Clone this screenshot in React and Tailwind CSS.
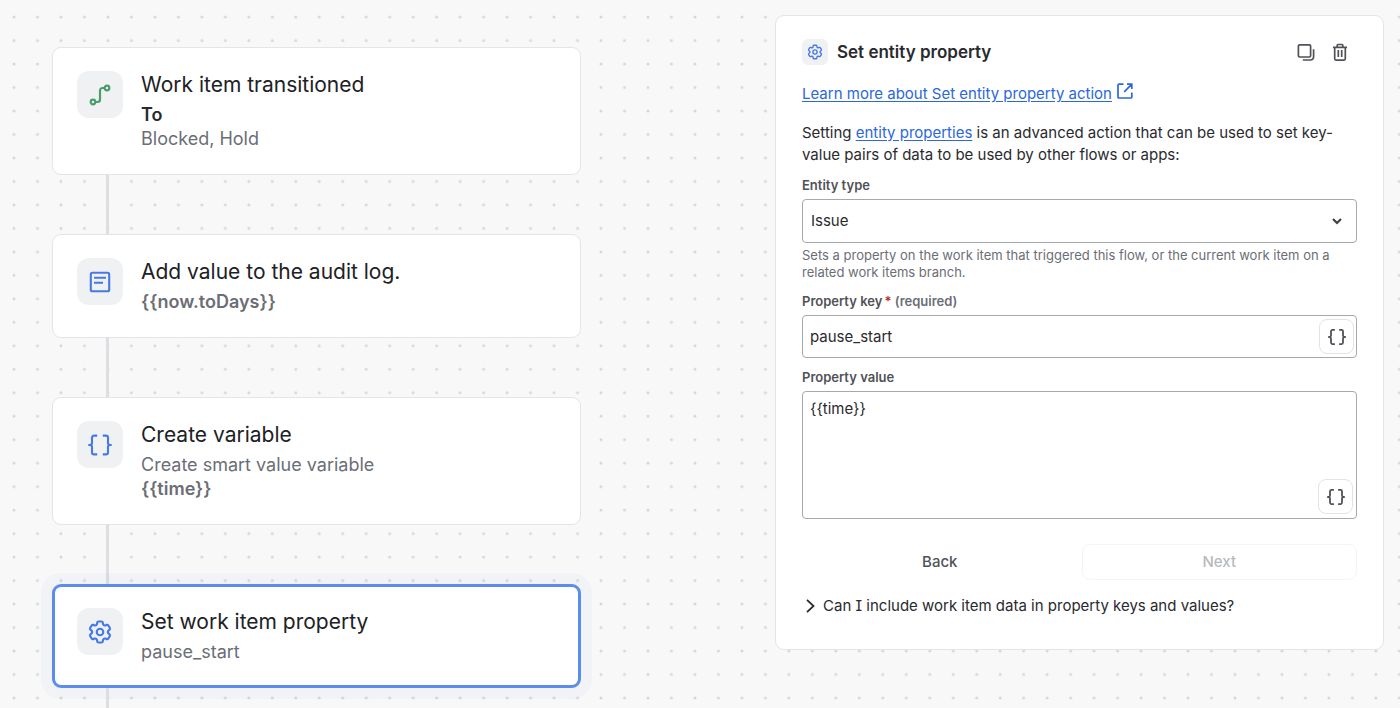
import { useState } from "react";

const GEAR =
  "M9.594 3.94c.09-.542.56-.94 1.11-.94h2.593c.55 0 1.02.398 1.11.94l.213 1.281c.063.374.313.686.645.87.074.04.147.083.22.127.325.196.72.257 1.075.124l1.217-.456a1.125 1.125 0 0 1 1.37.49l1.296 2.247a1.125 1.125 0 0 1-.26 1.431l-1.003.827c-.293.241-.438.613-.43.992a7.723 7.723 0 0 1 0 .255c-.008.378.137.75.43.991l1.004.827c.424.35.534.955.26 1.43l-1.298 2.247a1.125 1.125 0 0 1-1.369.491l-1.217-.456c-.355-.133-.75-.072-1.076.124a6.47 6.47 0 0 1-.22.128c-.331.183-.581.495-.644.869l-.213 1.281c-.09.543-.56.94-1.11.94h-2.594c-.55 0-1.019-.398-1.11-.94l-.213-1.281c-.062-.374-.312-.686-.644-.87a6.52 6.52 0 0 1-.22-.127c-.325-.196-.72-.257-1.076-.124l-1.217.456a1.125 1.125 0 0 1-1.369-.49l-1.297-2.247a1.125 1.125 0 0 1 .26-1.431l1.004-.827c.292-.24.437-.613.43-.991a6.932 6.932 0 0 1 0-.255c.007-.38-.138-.751-.43-.992l-1.004-.827a1.125 1.125 0 0 1-.26-1.43l1.297-2.247a1.125 1.125 0 0 1 1.37-.491l1.216.456c.356.133.751.072 1.076-.124.072-.044.146-.086.22-.128.332-.183.582-.495.644-.869l.214-1.28Z";

function Icon({ className, box = 24, stroke = 2, children }) {
  return (
    <svg
      className={className}
      viewBox={`0 0 ${box} ${box}`}
      fill="none"
      stroke="currentColor"
      strokeWidth={stroke}
      aria-hidden="true"
    >
      {children}
    </svg>
  );
}

function GearIcon({ className }) {
  return (
    <Icon className={className} stroke={1.85}>
      <path d={GEAR} strokeLinejoin="round" />
      <circle cx="12" cy="12" r="2.8" />
    </Icon>
  );
}

function TransitionIcon({ className }) {
  return (
    <Icon className={className} stroke={2.2}>
      <circle cx="5" cy="19" r="2.3" />
      <circle cx="19" cy="5" r="2.3" />
      <path d="M7.3 19h2.2a2.5 2.5 0 0 0 2.5-2.5v-9A2.5 2.5 0 0 1 14.5 5h2.2" />
    </Icon>
  );
}

function LogIcon({ className }) {
  return (
    <Icon className={className} stroke={2.1}>
      <rect x="2.8" y="2.8" width="18.4" height="18.4" rx="1.5" />
      <path d="M6 7.7h12M6 12.7h9" />
    </Icon>
  );
}

function BracesIcon({ className, stroke = 2.1 }) {
  return (
    <Icon className={className} stroke={stroke}>
      <path d="M9.2 2.6H6a2 2 0 0 0-2 2V10a2 2 0 0 1-2 2H.3H2a2 2 0 0 1 2 2v5.4a2 2 0 0 0 2 2h3.2" />
      <path d="M14.8 2.6H18a2 2 0 0 1 2 2V10a2 2 0 0 0 2 2h1.7H22a2 2 0 0 0-2 2v5.4a2 2 0 0 1-2 2h-3.2" />
    </Icon>
  );
}

function CopyIcon({ className }) {
  return (
    <Icon className={className} box={18} stroke={1.7}>
      <rect x="1.4" y="1.8" width="12.2" height="12.2" rx="1.2" />
      <path d="M5.8 17h7.8a3 3 0 0 0 3-3V6.2" />
    </Icon>
  );
}

function TrashIcon({ className }) {
  return (
    <Icon className={className} box={18} stroke={1.7}>
      <path d="M2 4.3h14M6.2 4.3V2.3a.8.8 0 0 1 .8-.8h4a.8.8 0 0 1 .8.8v2M3.7 4.3v11.5a1.3 1.3 0 0 0 1.3 1.3h8a1.3 1.3 0 0 0 1.3-1.3V4.3M7.3 7v7M10.7 7v7" />
    </Icon>
  );
}

function ExternalIcon({ className }) {
  return (
    <Icon className={className} box={16} stroke={1.7}>
      <path d="M6.5 1.2H2a1 1 0 0 0-1 1V14a1 1 0 0 0 1 1h11.8a1 1 0 0 0 1-1V9.5M10 1.2h4.8V6M14.8 1.2L7.2 8.8" />
    </Icon>
  );
}

const steps = [
  {
    title: "Work item transitioned",
    icon: <TransitionIcon className="size-6 text-[#4a9d6d]" />,
    lines: [
      { text: "To", className: "font-semibold text-[#292a2e]" },
      { text: "Blocked, Hold", className: "text-[#6b6e76]" },
    ],
  },
  {
    title: "Add value to the audit log.",
    icon: <LogIcon className="size-6 text-[#4679e6]" />,
    lines: [{ text: "{{now.toDays}}", className: "font-semibold text-[#6b6e76]" }],
  },
  {
    title: "Create variable",
    icon: <BracesIcon className="size-6 text-[#4679e6]" />,
    lines: [
      { text: "Create smart value variable", className: "text-[#6b6e76]" },
      { text: "{{time}}", className: "font-semibold text-[#6b6e76]" },
    ],
  },
  {
    title: "Set work item property",
    icon: <GearIcon className="size-7 text-[#4679e6]" />,
    lines: [{ text: "pause_start", className: "text-[#6b6e76]" }],
    selected: true,
  },
];

function Step({ step }) {
  return (
    <li>
      <button
        type="button"
        className={
          "flex w-full gap-[18px] rounded-[9px] bg-white text-left " +
          (step.selected
            ? "border-3 border-[#5c8ded] px-[22px] py-[21px] shadow-[0_0_0_11px_rgba(70,121,230,0.035)]"
            : "border border-[#e4e5e8] px-6 py-[23px]")
        }
      >
        <span className="flex h-[47px] w-[46px] shrink-0 items-center justify-center rounded-xl bg-[#f0f1f3]">
          {step.icon}
        </span>
        <span className="flex min-w-0 flex-col">
          <span className="mb-1 text-[21px] leading-7 text-[#202124]">{step.title}</span>
          {step.lines.map((line) => (
            <span key={line.text} className={"text-[18px] leading-6 " + line.className}>
              {line.text}
            </span>
          ))}
        </span>
      </button>
      <div className="ml-[54px] h-[59px] w-[3px] bg-[#dddee2]" />
    </li>
  );
}

function SmartValueButton() {
  return (
    <button
      type="button"
      aria-label="Insert smart value"
      className="flex size-[35px] items-center justify-center rounded-lg border border-[#e2e3e6] bg-white text-[#505258]"
    >
      <BracesIcon className="size-[18px]" stroke={2.4} />
    </button>
  );
}

function PropertyPanel() {
  const [key, setKey] = useState("pause_start");
  const [value, setValue] = useState("{{time}}");
  const label = "text-[13px] leading-[18px] font-semibold text-[#505258]";
  const field = "w-full rounded-[4px] border border-[#a5a8ae] bg-white text-[15px] text-[#292a2e]";

  return (
    <aside className="flex w-[609px] shrink-0 flex-col rounded-[9px] border border-[#e4e5e8] bg-white px-[26px] pt-[23px] pb-8 text-[15px] leading-[22px] text-[#292a2e]">
      <header className="flex items-center">
        <span className="flex size-[26px] items-center justify-center rounded-md bg-[#f0f1f3]">
          <GearIcon className="size-[18px] text-[#4679e6]" />
        </span>
        <h2 className="ml-[9px] flex-1 text-[17px] leading-[26px] font-semibold">Set entity property</h2>
        <div className="mr-2 flex gap-4 text-[#505258]">
          <button type="button" aria-label="Duplicate">
            <CopyIcon className="size-[18px]" />
          </button>
          <button type="button" aria-label="Delete">
            <TrashIcon className="size-[18px]" />
          </button>
        </div>
      </header>

      <a href="#learn-more" className="mt-[18px] flex gap-[5px] text-[#2c67dc]">
        <span className="underline underline-offset-2">Learn more about Set entity property action</span>
        <ExternalIcon className="size-4" />
      </a>

      <p className="mt-[17px]">
        Setting{" "}
        <a href="#entity-properties" className="text-[#2c67dc] underline underline-offset-2">
          entity properties
        </a>{" "}
        is an advanced action that can be used to set key-value pairs of data to be used by other flows or apps:
      </p>

      <label htmlFor="entity-type" className={"mt-[10px] " + label}>
        Entity type
      </label>
      <div className="relative mt-[5px]">
        <select id="entity-type" className={"block h-11 appearance-none px-2 " + field}>
          <option>Issue</option>
        </select>
        <svg
          className="pointer-events-none absolute top-4 right-[14px] size-3"
          viewBox="0 0 12 12"
          fill="none"
          stroke="#3f4146"
          strokeWidth="2.2"
          aria-hidden="true"
        >
          <path d="M2 4l4 4 4-4" />
        </svg>
      </div>
      <p className="mt-1 text-[13px] leading-[17px] text-[#6b6e76]">
        Sets a property on the work item that triggered this flow, or the current work item on a related work items
        branch.
      </p>

      <label htmlFor="property-key" className={"mt-[11px] " + label}>
        Property key<span className="ml-0.5 text-[#ae2e24]">*</span>{" "}
        <span className="text-[#6b6e76]">(required)</span>
      </label>
      <div className="relative mt-[5px]">
        <input
          id="property-key"
          type="text"
          required
          value={key}
          onChange={(e) => setKey(e.target.value)}
          className={"block h-[43px] pr-11 pl-[7px] " + field}
        />
        <div className="absolute top-1 right-[3px]">
          <SmartValueButton />
        </div>
      </div>

      <label htmlFor="property-value" className={"mt-[10px] " + label}>
        Property value
      </label>
      <div className="relative mt-[5px]">
        <textarea
          id="property-value"
          value={value}
          onChange={(e) => setValue(e.target.value)}
          className={"block h-32 resize-none px-[7px] py-[6px] leading-[22px] " + field}
        />
        <div className="absolute right-1 bottom-[5px]">
          <SmartValueButton />
        </div>
      </div>

      <div className="mt-[25px] grid grid-cols-2 gap-1 text-[15px] font-medium">
        <button type="button" className="h-9 rounded-lg text-[#505258]">
          Back
        </button>
        <button type="button" disabled className="h-9 rounded-lg border border-[#f4f4f6] text-[#b7b9be]">
          Next
        </button>
      </div>

      <button type="button" aria-expanded="false" className="mt-[15px] flex items-center gap-2 text-left">
        <svg
          className="ml-1 h-[14px] w-[9px]"
          viewBox="0 0 9 14"
          fill="none"
          stroke="currentColor"
          strokeWidth="1.8"
          aria-hidden="true"
        >
          <path d="M1 .8L7.5 7 1 13.2" />
        </svg>
        <span>
          Can <span className="[font-feature-settings:'cv08']">I</span> include work item data in property keys and
          values?
        </span>
      </button>
    </aside>
  );
}

export default function App() {
  return (
    <main className="relative isolate min-h-screen overflow-hidden bg-[#f8f8f8] font-[Inter,sans-serif]">
      <svg className="absolute inset-0 -z-10 size-full" aria-hidden="true">
        <defs>
          <pattern id="dots" x="2.3" y="5.3" width="23.48" height="23.48" patternUnits="userSpaceOnUse">
            <circle cx="11.74" cy="11.74" r="1.5" fill="#d6d7da" />
          </pattern>
        </defs>
        <rect width="100%" height="100%" fill="url(#dots)" />
      </svg>
      <div className="flex h-screen items-start justify-between gap-8 overflow-hidden pr-4">
        <ol className="w-full max-w-[581px] pt-[47px] pl-[52px]">
          {steps.map((step) => (
            <Step key={step.title} step={step} />
          ))}
        </ol>
        <div className="shrink-0 pt-[15px]">
          <PropertyPanel />
        </div>
      </div>
    </main>
  );
}
